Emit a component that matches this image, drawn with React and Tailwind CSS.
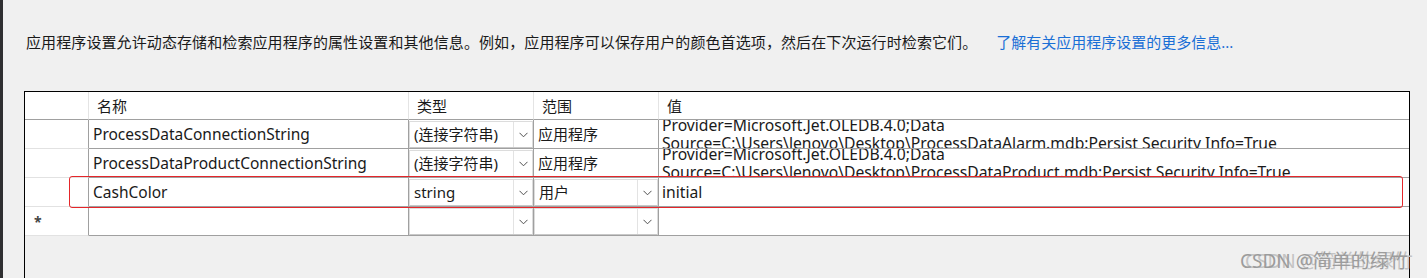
const cjk = "font-['Noto_Sans','Noto_Sans_CJK_SC',sans-serif]";

function Chevron() {
  return (
    <svg width="9" height="6" viewBox="0 0 9 6" className="text-[#505050]">
      <polyline points="0.5,0.8 4.5,4.8 8.5,0.8" fill="none" stroke="currentColor" strokeWidth="1" />
    </svg>
  );
}

function Combo({ text, btn = 19 }) {
  return (
    <div className="flex h-full border border-[#dcdcdc] border-b-[#c8c8c8] bg-white">
      <div className="flex flex-1 items-center overflow-hidden whitespace-nowrap pl-[4px]">{text}</div>
      <div className="flex items-center justify-center border-l border-[#e3e3e3]" style={{ width: btn }}>
        <Chevron />
      </div>
    </div>
  );
}

const rows = [
  {
    name: "ProcessDataConnectionString",
    type: "(连接字符串)",
    scope: "应用程序",
    scopeCombo: false,
    value: ["Provider=Microsoft.Jet.OLEDB.4.0;Data", "Source=C:\\Users\\lenovo\\Desktop\\ProcessDataAlarm.mdb:Persist Security Info=True"],
  },
  {
    name: "ProcessDataProductConnectionString",
    type: "(连接字符串)",
    scope: "应用程序",
    scopeCombo: false,
    value: ["Provider=Microsoft.Jet.OLEDB.4.0;Data", "Source=C:\\Users\\lenovo\\Desktop\\ProcessDataProduct.mdb:Persist Security Info=True"],
  },
  { name: "CashColor", type: "string", scope: "用户", scopeCombo: true, value: ["initial"] },
];

export default function App() {
  return (
    <div className={`relative flex h-[278px] w-[1427px] overflow-hidden bg-[#f0f0f0] text-[15px] text-[#1a1a1a] ${cjk}`}>
      <div className="w-[3px] shrink-0 bg-[#2f2f31]" />
      <div className="flex flex-1 flex-col">
        <div className="mt-[32px] flex h-[20px] items-center whitespace-nowrap pl-[23px] leading-[20px]">
          <span className="tracking-[0.1px]">应用程序设置允许动态存储和检索应用程序的属性设置和其他信息。例如，应用程序可以保存用户的颜色首选项，然后在下次运行时检索它们。</span>
          <span className="ml-[19px] text-[#1a6fd6]">了解有关应用程序设置的更多信息...</span>
        </div>

        <div className="ml-[21px] mt-[39px] flex w-[1386px] flex-1 flex-col border-x border-t border-black">
          <div className="grid grid-cols-[64px_320px_125px_125px_750px] bg-white">
            <div className="h-[28px] border-b border-r border-[#a0a0a0] border-r-[#e4e4e4]" />
            <div className="flex h-[28px] items-center border-b border-r border-[#a0a0a0] border-r-[#e4e4e4] pl-[8px] pt-[2px]">名称</div>
            <div className="flex h-[28px] items-center border-b border-r border-[#a0a0a0] border-r-[#e4e4e4] pl-[8px] pt-[2px]">类型</div>
            <div className="flex h-[28px] items-center border-b border-r border-[#a0a0a0] border-r-[#e4e4e4] pl-[8px] pt-[2px]">范围</div>
            <div className="flex h-[28px] items-center border-b border-[#a0a0a0] pl-[8px] pt-[2px]">值</div>

            {rows.map((r) => (
              <div key={r.name} className="contents">
                <div className="h-[29px] border-b border-r border-[#e2e2e2] border-r-[#a0a0a0]" />
                <div className="flex h-[29px] items-center whitespace-nowrap border-b border-r border-[#a0a0a0] pl-[4px] pt-[1px] text-[15.5px]">{r.name}</div>
                <div className="h-[29px] border-b border-r border-[#a0a0a0] pt-[1px]">
                  <Combo text={r.type} />
                </div>
                <div className="h-[29px] border-b border-r border-[#a0a0a0]">
                  {r.scopeCombo ? (
                    <div className="h-full pt-[1px]">
                      <Combo text={r.scope} btn={20} />
                    </div>
                  ) : (
                    <div className="flex h-full items-center pl-[4px]">{r.scope}</div>
                  )}
                </div>
                <div className="flex h-[29px] flex-col justify-center overflow-hidden whitespace-nowrap border-b border-[#a0a0a0] pl-[3px] text-[15.7px] leading-[18px]">
                  {r.value.map((v) => (
                    <div key={v}>{v}</div>
                  ))}
                </div>
              </div>
            ))}

            <div className="flex h-[29px] items-center border-b border-r border-[#e2e2e2] border-r-[#a0a0a0] pl-[9px] text-[14px] font-bold text-[#444]">*</div>
            <div className="h-[29px] border-b border-r border-[#a0a0a0]" />
            <div className="h-[29px] border-b border-r border-[#a0a0a0] pt-[1px]">
              <Combo text="" />
            </div>
            <div className="h-[29px] border-b border-r border-[#a0a0a0] pt-[1px]">
              <Combo text="" btn={20} />
            </div>
            <div className="h-[29px] border-b border-[#a0a0a0]" />
          </div>
        </div>
      </div>

      <div className="pointer-events-none absolute left-[69px] top-[176px] h-[32px] w-[1334px] rounded-[3px] border border-[#e5262a]" />

      <div className="pointer-events-none absolute left-[1240px] top-[247px] whitespace-nowrap text-[19px] text-[#9c9c9c]">
        <span className="absolute left-[5px] top-0 text-[#c4c4c4]">CSDN @简单的绿竹</span>
        <span className="relative">CSDN @简单的绿竹</span>
      </div>
    </div>
  );
}
